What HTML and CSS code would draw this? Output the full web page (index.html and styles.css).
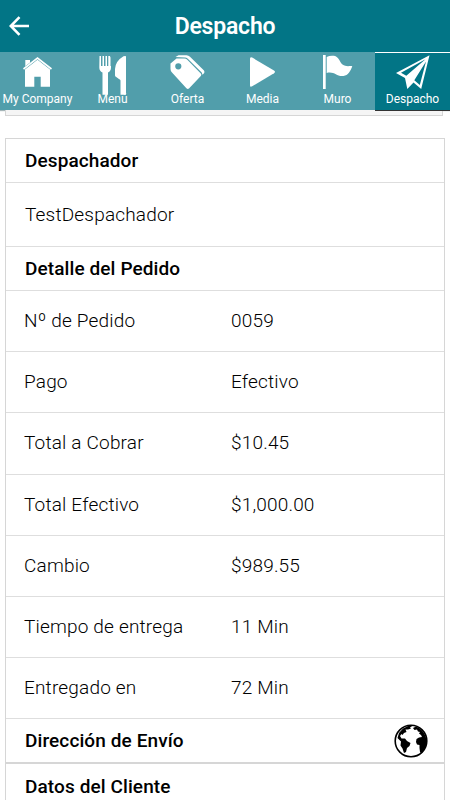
FILE: index.html
```html
<!DOCTYPE html>
<html lang="es">
  <head>
    <meta charset="UTF-8" />
    <meta name="viewport" content="width=device-width, initial-scale=1.0" />
    <title>Despacho</title>
    <link rel="stylesheet" href="styles.css">
  </head>
  <body>
    <header class="header">
      <svg class="back" viewBox="0 0 20 20">
        <path d="M20 10H2M10.500 1.200L1.800 10l8.700 8.800" />
      </svg>
      <h1>Despacho</h1>
    </header>
    <nav class="tabs">
      <a class="tab">
        <svg viewBox="0 0 75 40">
          <path d="M25 17.500L37.500 7.800 50 17.500V34.700H40.700V24.700H34.300V34.700H25z" />
          <path d="M25.300 8H30V10.500L25.300 14.300z" />
          <path class="line" d="M23.500 17L37.500 6 51.500 17" />
        </svg>
        <span>My Company</span>
      </a>
      <a class="tab">
        <svg viewBox="0 0 75 40">
          <path d="M24.500 4H26V14H27.500V4H29V14H30.500V4H32V14H33.300V4H35V14H35.500V4.500Q36 4.500 36 6V15.500Q36 19 33 20.500V42.700H27.500V20.500Q24.300 19 24.300 15.500z" />
          <path d="M51 4.500V42.700H45.500V28.500Q45.500 27.500 44 27L40.500 24.500Q40 24 40 23V17Q40.500 9 48.500 4.300Q51 3.500 51 4.500z" />
        </svg>
        <span>Menú</span>
      </a>
      <a class="tab">
        <svg viewBox="0 0 75 40">
          <path d="M25.500 5L28.500 3.300H36.500Q38.500 3.300 40 4.800L54 18.500Q55 20 54 21.200L52.500 22.700 51.700 20.500 37.500 6.500Q36.500 5.500 35 5.500z" />
          <path fill-rule="evenodd" d="M26.500 6.500H34.500Q36 6.500 37.300 7.800L50.800 21.500Q52 22.800 50.800 24L39.200 36.200Q37.800 37.600 36.400 36.200L22 20.500Q20.500 19 20.500 17V11.500zM28.300 11.200a3.100 3.100 0 1 0 0 6.200a3.100 3.100 0 1 0 0-6.200z" />
        </svg>
        <span>Oferta</span>
      </a>
      <a class="tab">
        <svg viewBox="0 0 75 40">
          <path d="M25 6.800Q25 4.500 27.200 5.600L49 18.500Q51 19.800 49 21.200L27.200 34.300Q25 35.500 25 33.200z" />
        </svg>
        <span>Media</span>
      </a>
      <a class="tab">
        <svg viewBox="0 0 75 40">
          <path d="M23 3H25.700V37H23z" />
          <path d="M26.700 5Q30 3.200 34 3.800C39 4.700 39.500 10 42.500 12.500C45.500 15 49 13.800 52.300 14.200C50.500 19 48 23.300 43.500 24C36.500 25 34.500 19 26.700 21z" />
        </svg>
        <span>Muro</span>
      </a>
      <a class="tab active">
        <svg viewBox="0 0 75 40">
          <path fill-rule="evenodd" d="M54.500 3.200L46.200 37 38.500 30.500 32.300 37 30 26 21 21zM50.500 7.300L26 20.800 31.300 23.800zM51 9.500L39.300 28.300 44.800 33z" />
          <path class="crease" d="M51.500 8.200L33.800 26.700" />
        </svg>
        <span>Despacho</span>
      </a>
    </nav>
    <main class="content">
      <section class="card previous"></section>
      <section class="card order">
        <h2>Despachador</h2>
        <p class="dispatcher">TestDespachador</p>
        <h2>Detalle del Pedido</h2>
        <dl>
          <div class="row"><dt>Nº de Pedido</dt><dd>0059</dd></div>
          <div class="row"><dt>Pago</dt><dd>Efectivo</dd></div>
          <div class="row"><dt>Total a Cobrar</dt><dd>$10.45</dd></div>
          <div class="row"><dt>Total Efectivo</dt><dd>$1,000.00</dd></div>
          <div class="row"><dt>Cambio</dt><dd>$989.55</dd></div>
          <div class="row"><dt>Tiempo de entrega</dt><dd>11 Min</dd></div>
          <div class="row"><dt>Entregado en</dt><dd>72 Min</dd></div>
        </dl>
        <h2 class="address">
          Dirección de Envío
          <svg class="globe" viewBox="0 0 34 34">
            <circle cx="17" cy="17" r="15.800" />
            <path d="M5 9L9 4.500 14 2 19 1.500 16 3.500 17 4.500 14 5.500 11.500 5.500 12.500 8 10 9 8.500 11 7.500 10 6 12 7.500 14.500 11 14.500 13 17 16.500 19 15.500 22 13 24 12 28 10 29 8.500 24.500 6.500 21.500 7 17.500 3.500 14z" />
            <path d="M19 4L22 2.500 25 4 28 6.500 30.500 10 32.500 15V20L30.500 25.500 27.500 29.500 26 28 25.500 24 25.500 21 23 20.500 22 18 22.500 15 25 13.500 28 13 27 11 25 9.500 26 8 24 7.500 23 5.500 20.500 6z" />
          </svg>
        </h2>
        <h2 class="client">Datos del Cliente</h2>
      </section>
    </main>
  </body>
</html>
```
FILE: styles.css
```css
body {
  font-family: Roboto, "Liberation Sans", sans-serif;
  margin: 0;
  height: 800px;
  overflow: hidden;
  background: #fff;
  color: #000;
}
h1, h2, p, dl, dd {
  margin: 0;
}
.header {
  display: grid;
  grid-template-columns: 38px 1fr 38px;
  align-items: center;
  height: 52px;
  background: #027586;
  color: #fff;
}
.header h1 {
  font-size: 23px;
  font-weight: 600;
  letter-spacing: -0.2px;
  text-align: center;
}
.back {
  width: 20px;
  height: 20px;
  margin-left: 9px;
  fill: none;
  stroke: #fff;
  stroke-width: 2.6;
}
.tabs {
  display: grid;
  grid-template-columns: repeat(6, 75px);
  height: 58px;
  background: #519eab;
  box-shadow: 0 1px 1px #a5b5b8;
}
.tab {
  box-sizing: border-box;
  height: 58px;
  color: #fff;
  font-size: 12px;
  line-height: 14px;
  font-weight: 450;
  text-align: center;
}
.tab svg {
  display: block;
  width: 75px;
  height: 40px;
  fill: #fff;
  overflow: visible;
}
.tab span {
  display: block;
  position: relative;
  white-space: nowrap;
}
.tab .line {
  fill: none;
  stroke: #fff;
  stroke-width: 1.6;
}
.tab .crease {
  stroke: #fff;
  stroke-width: 1;
}
.active {
  background: #027586;
  box-shadow: inset 0 1px #fff, 0 1px #333;
}
.card {
  box-sizing: border-box;
  border: 1px solid #d6d6d6;
}
.previous {
  width: 438px;
  height: 6px;
  margin-left: 5px;
  border-top: 0;
  background: #f5f5f5;
}
.order {
  width: 440px;
  height: 680px;
  margin: 22px 0 0 5px;
  font-size: 19px;
  font-weight: 350;
  letter-spacing: 0.18px;
}
.order h2 {
  box-sizing: border-box;
  height: 44px;
  padding-left: 19px;
  border-bottom: 1px solid #dedede;
  font-size: 19px;
  font-weight: 500;
  letter-spacing: 0.1px;
  line-height: 43px;
}
.dispatcher {
  height: 63px;
  padding-left: 19px;
  border-bottom: 1px solid #dedede;
  line-height: 63px;
}
.row {
  display: grid;
  grid-template-columns: 207px 1fr;
  box-sizing: border-box;
  height: 61.2px;
  padding-left: 18px;
  border-bottom: 1px solid #dedede;
  line-height: 60px;
}
.order .address {
  display: flex;
  justify-content: space-between;
  align-items: center;
  height: 45px;
  padding-right: 16px;
  border-bottom: 2px solid #d6d6d6;
}
.order .client {
  line-height: 45px;
}
.globe {
  width: 34px;
  height: 34px;
}
.globe circle {
  fill: none;
  stroke: #000;
  stroke-width: 1.6;
}
```
